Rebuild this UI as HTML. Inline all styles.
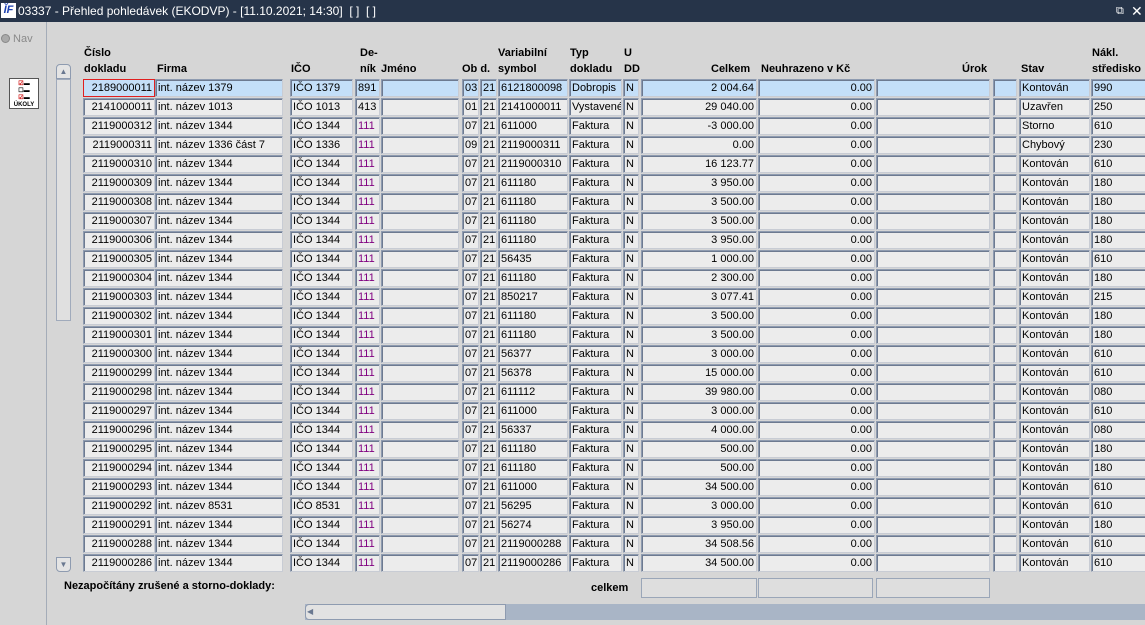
<!DOCTYPE html>
<html><head><meta charset="utf-8"><style>
*{box-sizing:border-box;margin:0;padding:0}
body{width:1145px;height:625px;overflow:hidden;background:#d6d6d6;font-family:"Liberation Sans",Arial,sans-serif;font-size:12px;color:#000;position:relative}
.t{position:absolute;left:0;top:0;width:1145px;height:22px;background:#263449;color:#fff;font-size:12px;line-height:22px}
.a{position:absolute}
.h{position:absolute;font-weight:bold;font-size:11px;line-height:16px}
.r{position:absolute;left:0;height:18px;width:1145px}
.r div{position:absolute;top:0;height:18px;border:1px solid #8e9bb0;border-right-color:#c8ccd4;border-bottom-color:#c8ccd4;box-shadow:inset 1px 1px 0 #6d7a90;background:#ececec;line-height:17px;padding:0 2px;white-space:nowrap;overflow:hidden;font-size:11px}
.s div{background:#c4dff8}
.c1{left:83px;width:72px;text-align:right}
.c2{left:155px;width:128px}
.c3{left:290px;width:63px}
.c4{left:355px;width:25px;color:#800080}
.c5{left:381px;width:78px}
.c6{left:462px;width:17px}
.c7{left:480px;width:17px}
.c8{left:498px;width:70px}
.c9{left:569px;width:53px}
.c10{left:623px;width:16px}
.c11{left:641px;width:116px;text-align:right}
.c12{left:758px;width:117px;text-align:right}
.c13{left:876px;width:114px}
.c14{left:993px;width:24px}
.c15{left:1019px;width:71px}
.c16{left:1091px;width:60px}
.bx{position:absolute;top:578px;height:20px;border:1px solid #9aa6b8;background:#dedede}
</style></head><body>
<div class="t"><span style="position:absolute;left:1px;top:3px;width:15px;height:15px;background:#fff;color:#1a3fb0;font-weight:bold;font-style:italic;font-size:11px;line-height:15px;text-align:center">ĬF</span><span style="position:absolute;left:18px">03337 - Přehled pohledávek (EKODVP) - [11.10.2021; 14:30]&nbsp; [ ]&nbsp; [ ]</span><span style="position:absolute;left:1116px;top:0;font-size:11px">⧉</span><span style="position:absolute;left:1131px;top:0;font-size:14px">✕</span></div>
<div class="a" style="left:46px;top:22px;width:1px;height:603px;background:#a4acb8"></div>
<div class="a" style="left:1px;top:32px;width:33px;height:14px;color:#8a8a8a;font-size:11px;line-height:14px"><span style="display:inline-block;width:9px;height:9px;border-radius:50%;background:#aaa;border:1px solid #888;vertical-align:-1px"></span> Nav</div>
<div class="a" style="left:9px;top:78px;width:30px;height:31px;background:#fff;border:1px solid #555;font-size:6px;font-weight:bold;text-align:center;line-height:7px;padding-top:2px"><span style="color:#c00">☑</span>▬<br>☐▬<br><span style="color:#c00">☑</span>▬<br>ÚKOLY</div>
<div class="a" style="left:56px;top:64px;width:15px;height:15px;border:1px solid #8e9bb0;border-radius:4px 4px 0 0;background:#e4e4e4;font-size:8px;text-align:center;line-height:13px;color:#6a7890">▲</div>
<div class="a" style="left:56px;top:79px;width:15px;height:242px;border:1px solid #a0aabb;background:#e0e0e0"></div>
<div class="a" style="left:56px;top:557px;width:15px;height:15px;border:1px solid #8e9bb0;border-radius:0 0 4px 4px;background:#e4e4e4;font-size:8px;text-align:center;line-height:13px;color:#6a7890">▼</div>
<div class="h" style="left:84px;top:45px">Číslo<br>dokladu</div>
<div class="h" style="left:157px;top:61px">Firma</div>
<div class="h" style="left:291px;top:61px">IČO</div>
<div class="h" style="left:360px;top:45px">De-<br>ník</div>
<div class="h" style="left:381px;top:61px">Jméno</div>
<div class="h" style="left:462px;top:61px">Ob d.</div>
<div class="h" style="left:498px;top:45px">Variabilní<br>symbol</div>
<div class="h" style="left:570px;top:45px">Typ<br>dokladu</div>
<div class="h" style="left:624px;top:45px">U<br>DD</div>
<div class="h" style="left:711px;top:61px">Celkem</div>
<div class="h" style="left:761px;top:61px">Neuhrazeno v Kč</div>
<div class="h" style="left:962px;top:61px">Úrok</div>
<div class="h" style="left:1021px;top:61px">Stav</div>
<div class="h" style="left:1092px;top:45px">Nákl.<br>středisko</div>
<div class="r s" style="top:79px"><div class="c1" style="border:1px solid #e02020;box-shadow:none">2189000011</div><div class="c2">int. název 1379</div><div class="c3">IČO 1379</div><div class="c4" style="color:#000">891</div><div class="c5"></div><div class="c6">03</div><div class="c7">21</div><div class="c8">6121800098</div><div class="c9">Dobropis</div><div class="c10">N</div><div class="c11">2 004.64</div><div class="c12">0.00</div><div class="c13"></div><div class="c14"></div><div class="c15">Kontován</div><div class="c16">990</div></div>
<div class="r" style="top:98px"><div class="c1">2141000011</div><div class="c2">int. název 1013</div><div class="c3">IČO 1013</div><div class="c4" style="color:#000">413</div><div class="c5"></div><div class="c6">01</div><div class="c7">21</div><div class="c8">2141000011</div><div class="c9">Vystavené</div><div class="c10">N</div><div class="c11">29 040.00</div><div class="c12">0.00</div><div class="c13"></div><div class="c14"></div><div class="c15">Uzavřen</div><div class="c16">250</div></div>
<div class="r" style="top:117px"><div class="c1">2119000312</div><div class="c2">int. název 1344</div><div class="c3">IČO 1344</div><div class="c4">111</div><div class="c5"></div><div class="c6">07</div><div class="c7">21</div><div class="c8">611000</div><div class="c9">Faktura</div><div class="c10">N</div><div class="c11">-3 000.00</div><div class="c12">0.00</div><div class="c13"></div><div class="c14"></div><div class="c15">Storno</div><div class="c16">610</div></div>
<div class="r" style="top:136px"><div class="c1">2119000311</div><div class="c2">int. název 1336 část 7</div><div class="c3">IČO 1336</div><div class="c4">111</div><div class="c5"></div><div class="c6">09</div><div class="c7">21</div><div class="c8">2119000311</div><div class="c9">Faktura</div><div class="c10">N</div><div class="c11">0.00</div><div class="c12">0.00</div><div class="c13"></div><div class="c14"></div><div class="c15">Chybový</div><div class="c16">230</div></div>
<div class="r" style="top:155px"><div class="c1">2119000310</div><div class="c2">int. název 1344</div><div class="c3">IČO 1344</div><div class="c4">111</div><div class="c5"></div><div class="c6">07</div><div class="c7">21</div><div class="c8">2119000310</div><div class="c9">Faktura</div><div class="c10">N</div><div class="c11">16 123.77</div><div class="c12">0.00</div><div class="c13"></div><div class="c14"></div><div class="c15">Kontován</div><div class="c16">610</div></div>
<div class="r" style="top:174px"><div class="c1">2119000309</div><div class="c2">int. název 1344</div><div class="c3">IČO 1344</div><div class="c4">111</div><div class="c5"></div><div class="c6">07</div><div class="c7">21</div><div class="c8">611180</div><div class="c9">Faktura</div><div class="c10">N</div><div class="c11">3 950.00</div><div class="c12">0.00</div><div class="c13"></div><div class="c14"></div><div class="c15">Kontován</div><div class="c16">180</div></div>
<div class="r" style="top:193px"><div class="c1">2119000308</div><div class="c2">int. název 1344</div><div class="c3">IČO 1344</div><div class="c4">111</div><div class="c5"></div><div class="c6">07</div><div class="c7">21</div><div class="c8">611180</div><div class="c9">Faktura</div><div class="c10">N</div><div class="c11">3 500.00</div><div class="c12">0.00</div><div class="c13"></div><div class="c14"></div><div class="c15">Kontován</div><div class="c16">180</div></div>
<div class="r" style="top:212px"><div class="c1">2119000307</div><div class="c2">int. název 1344</div><div class="c3">IČO 1344</div><div class="c4">111</div><div class="c5"></div><div class="c6">07</div><div class="c7">21</div><div class="c8">611180</div><div class="c9">Faktura</div><div class="c10">N</div><div class="c11">3 500.00</div><div class="c12">0.00</div><div class="c13"></div><div class="c14"></div><div class="c15">Kontován</div><div class="c16">180</div></div>
<div class="r" style="top:231px"><div class="c1">2119000306</div><div class="c2">int. název 1344</div><div class="c3">IČO 1344</div><div class="c4">111</div><div class="c5"></div><div class="c6">07</div><div class="c7">21</div><div class="c8">611180</div><div class="c9">Faktura</div><div class="c10">N</div><div class="c11">3 950.00</div><div class="c12">0.00</div><div class="c13"></div><div class="c14"></div><div class="c15">Kontován</div><div class="c16">180</div></div>
<div class="r" style="top:250px"><div class="c1">2119000305</div><div class="c2">int. název 1344</div><div class="c3">IČO 1344</div><div class="c4">111</div><div class="c5"></div><div class="c6">07</div><div class="c7">21</div><div class="c8">56435</div><div class="c9">Faktura</div><div class="c10">N</div><div class="c11">1 000.00</div><div class="c12">0.00</div><div class="c13"></div><div class="c14"></div><div class="c15">Kontován</div><div class="c16">610</div></div>
<div class="r" style="top:269px"><div class="c1">2119000304</div><div class="c2">int. název 1344</div><div class="c3">IČO 1344</div><div class="c4">111</div><div class="c5"></div><div class="c6">07</div><div class="c7">21</div><div class="c8">611180</div><div class="c9">Faktura</div><div class="c10">N</div><div class="c11">2 300.00</div><div class="c12">0.00</div><div class="c13"></div><div class="c14"></div><div class="c15">Kontován</div><div class="c16">180</div></div>
<div class="r" style="top:288px"><div class="c1">2119000303</div><div class="c2">int. název 1344</div><div class="c3">IČO 1344</div><div class="c4">111</div><div class="c5"></div><div class="c6">07</div><div class="c7">21</div><div class="c8">850217</div><div class="c9">Faktura</div><div class="c10">N</div><div class="c11">3 077.41</div><div class="c12">0.00</div><div class="c13"></div><div class="c14"></div><div class="c15">Kontován</div><div class="c16">215</div></div>
<div class="r" style="top:307px"><div class="c1">2119000302</div><div class="c2">int. název 1344</div><div class="c3">IČO 1344</div><div class="c4">111</div><div class="c5"></div><div class="c6">07</div><div class="c7">21</div><div class="c8">611180</div><div class="c9">Faktura</div><div class="c10">N</div><div class="c11">3 500.00</div><div class="c12">0.00</div><div class="c13"></div><div class="c14"></div><div class="c15">Kontován</div><div class="c16">180</div></div>
<div class="r" style="top:326px"><div class="c1">2119000301</div><div class="c2">int. název 1344</div><div class="c3">IČO 1344</div><div class="c4">111</div><div class="c5"></div><div class="c6">07</div><div class="c7">21</div><div class="c8">611180</div><div class="c9">Faktura</div><div class="c10">N</div><div class="c11">3 500.00</div><div class="c12">0.00</div><div class="c13"></div><div class="c14"></div><div class="c15">Kontován</div><div class="c16">180</div></div>
<div class="r" style="top:345px"><div class="c1">2119000300</div><div class="c2">int. název 1344</div><div class="c3">IČO 1344</div><div class="c4">111</div><div class="c5"></div><div class="c6">07</div><div class="c7">21</div><div class="c8">56377</div><div class="c9">Faktura</div><div class="c10">N</div><div class="c11">3 000.00</div><div class="c12">0.00</div><div class="c13"></div><div class="c14"></div><div class="c15">Kontován</div><div class="c16">610</div></div>
<div class="r" style="top:364px"><div class="c1">2119000299</div><div class="c2">int. název 1344</div><div class="c3">IČO 1344</div><div class="c4">111</div><div class="c5"></div><div class="c6">07</div><div class="c7">21</div><div class="c8">56378</div><div class="c9">Faktura</div><div class="c10">N</div><div class="c11">15 000.00</div><div class="c12">0.00</div><div class="c13"></div><div class="c14"></div><div class="c15">Kontován</div><div class="c16">610</div></div>
<div class="r" style="top:383px"><div class="c1">2119000298</div><div class="c2">int. název 1344</div><div class="c3">IČO 1344</div><div class="c4">111</div><div class="c5"></div><div class="c6">07</div><div class="c7">21</div><div class="c8">611112</div><div class="c9">Faktura</div><div class="c10">N</div><div class="c11">39 980.00</div><div class="c12">0.00</div><div class="c13"></div><div class="c14"></div><div class="c15">Kontován</div><div class="c16">080</div></div>
<div class="r" style="top:402px"><div class="c1">2119000297</div><div class="c2">int. název 1344</div><div class="c3">IČO 1344</div><div class="c4">111</div><div class="c5"></div><div class="c6">07</div><div class="c7">21</div><div class="c8">611000</div><div class="c9">Faktura</div><div class="c10">N</div><div class="c11">3 000.00</div><div class="c12">0.00</div><div class="c13"></div><div class="c14"></div><div class="c15">Kontován</div><div class="c16">610</div></div>
<div class="r" style="top:421px"><div class="c1">2119000296</div><div class="c2">int. název 1344</div><div class="c3">IČO 1344</div><div class="c4">111</div><div class="c5"></div><div class="c6">07</div><div class="c7">21</div><div class="c8">56337</div><div class="c9">Faktura</div><div class="c10">N</div><div class="c11">4 000.00</div><div class="c12">0.00</div><div class="c13"></div><div class="c14"></div><div class="c15">Kontován</div><div class="c16">080</div></div>
<div class="r" style="top:440px"><div class="c1">2119000295</div><div class="c2">int. název 1344</div><div class="c3">IČO 1344</div><div class="c4">111</div><div class="c5"></div><div class="c6">07</div><div class="c7">21</div><div class="c8">611180</div><div class="c9">Faktura</div><div class="c10">N</div><div class="c11">500.00</div><div class="c12">0.00</div><div class="c13"></div><div class="c14"></div><div class="c15">Kontován</div><div class="c16">180</div></div>
<div class="r" style="top:459px"><div class="c1">2119000294</div><div class="c2">int. název 1344</div><div class="c3">IČO 1344</div><div class="c4">111</div><div class="c5"></div><div class="c6">07</div><div class="c7">21</div><div class="c8">611180</div><div class="c9">Faktura</div><div class="c10">N</div><div class="c11">500.00</div><div class="c12">0.00</div><div class="c13"></div><div class="c14"></div><div class="c15">Kontován</div><div class="c16">180</div></div>
<div class="r" style="top:478px"><div class="c1">2119000293</div><div class="c2">int. název 1344</div><div class="c3">IČO 1344</div><div class="c4">111</div><div class="c5"></div><div class="c6">07</div><div class="c7">21</div><div class="c8">611000</div><div class="c9">Faktura</div><div class="c10">N</div><div class="c11">34 500.00</div><div class="c12">0.00</div><div class="c13"></div><div class="c14"></div><div class="c15">Kontován</div><div class="c16">610</div></div>
<div class="r" style="top:497px"><div class="c1">2119000292</div><div class="c2">int. název 8531</div><div class="c3">IČO 8531</div><div class="c4">111</div><div class="c5"></div><div class="c6">07</div><div class="c7">21</div><div class="c8">56295</div><div class="c9">Faktura</div><div class="c10">N</div><div class="c11">3 000.00</div><div class="c12">0.00</div><div class="c13"></div><div class="c14"></div><div class="c15">Kontován</div><div class="c16">610</div></div>
<div class="r" style="top:516px"><div class="c1">2119000291</div><div class="c2">int. název 1344</div><div class="c3">IČO 1344</div><div class="c4">111</div><div class="c5"></div><div class="c6">07</div><div class="c7">21</div><div class="c8">56274</div><div class="c9">Faktura</div><div class="c10">N</div><div class="c11">3 950.00</div><div class="c12">0.00</div><div class="c13"></div><div class="c14"></div><div class="c15">Kontován</div><div class="c16">180</div></div>
<div class="r" style="top:535px"><div class="c1">2119000288</div><div class="c2">int. název 1344</div><div class="c3">IČO 1344</div><div class="c4">111</div><div class="c5"></div><div class="c6">07</div><div class="c7">21</div><div class="c8">2119000288</div><div class="c9">Faktura</div><div class="c10">N</div><div class="c11">34 508.56</div><div class="c12">0.00</div><div class="c13"></div><div class="c14"></div><div class="c15">Kontován</div><div class="c16">610</div></div>
<div class="r" style="top:554px"><div class="c1">2119000286</div><div class="c2">int. název 1344</div><div class="c3">IČO 1344</div><div class="c4">111</div><div class="c5"></div><div class="c6">07</div><div class="c7">21</div><div class="c8">2119000286</div><div class="c9">Faktura</div><div class="c10">N</div><div class="c11">34 500.00</div><div class="c12">0.00</div><div class="c13"></div><div class="c14"></div><div class="c15">Kontován</div><div class="c16">610</div></div>
<div class="h" style="left:64px;top:578px">Nezapočítány zrušené a storno-doklady:</div>
<div class="h" style="left:591px;top:580px">celkem</div>
<div class="bx" style="left:641px;width:116px"></div>
<div class="bx" style="left:758px;width:115px"></div>
<div class="bx" style="left:876px;width:114px"></div>
<div class="a" style="left:305px;top:604px;width:840px;height:16px;background:#a9b5c6"></div>
<div class="a" style="left:305px;top:604px;width:201px;height:16px;background:#e2e2e2;border:1px solid #8e9bb0;border-radius:4px 0 0 4px;font-size:8px;line-height:14px;color:#6a7890;padding-left:1px">◀</div>
</body></html>
